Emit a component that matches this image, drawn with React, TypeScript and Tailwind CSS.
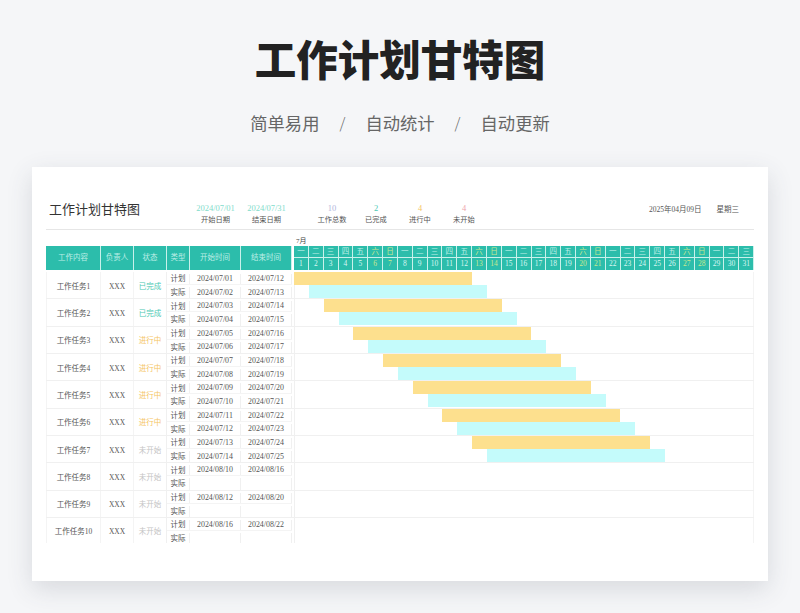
const SANS = "font-['Noto_Sans_CJK_SC',sans-serif]";
const SERIF = "font-['Liberation_Serif','Noto_Sans_CJK_SC',serif]";

const WEEK = ["一", "二", "三", "四", "五", "六", "日"];
const DAY_W = 460 / 31;

type Task = {
  name: string;
  status: string;
  color: string;
  plan: string[];
  real: string[];
};

const pad = (n: number) => String(n).padStart(2, "0");

const done = "text-[#4cc9b4]";
const doing = "text-[#f5c563]";
const todo = "text-[#c4c4c4]";

const TASKS: Task[] = [
  ...[1, 2, 3, 4, 5, 6, 7].map((n) => ({
    name: `工作任务${n}`,
    status: n <= 2 ? "已完成" : n <= 6 ? "进行中" : "未开始",
    color: n <= 2 ? done : n <= 6 ? doing : todo,
    plan: [`2024/07/${pad(2 * n - 1)}`, `2024/07/${pad(2 * n + 10)}`],
    real: [`2024/07/${pad(2 * n)}`, `2024/07/${pad(2 * n + 11)}`],
  })),
  { name: "工作任务8", status: "未开始", color: todo, plan: ["2024/08/10", "2024/08/16"], real: ["", ""] },
  { name: "工作任务9", status: "未开始", color: todo, plan: ["2024/08/12", "2024/08/20"], real: ["", ""] },
  { name: "工作任务10", status: "未开始", color: todo, plan: ["2024/08/16", "2024/08/22"], real: ["", ""] },
];

const HEAD = [
  ["工作内容", "w-[55px]"],
  ["负责人", "w-[33px]"],
  ["状态", "w-[33px]"],
  ["类型", "w-[23px]"],
  ["开始时间", "w-[51px]"],
  ["结束时间", "w-[51px]"],
];

function Stat({ value, label, color, width }: { value: string; label: string; color: string; width: string }) {
  return (
    <div className={`flex flex-col items-center ${width}`}>
      <span className={`text-[8.5px] leading-[11px] ${color}`}>{value}</span>
      <span className="mt-[1px] text-[7.25px] leading-[11px] text-[#555]">{label}</span>
    </div>
  );
}

function SubRow({ type, from, to, last }: { type: string; from: string; to: string; last?: boolean }) {
  const border = last ? "" : "border-b border-[#f4f4f4]";
  return (
    <div className={`flex h-1/2 pt-[2px] text-[#555] ${border}`}>
      <div className="flex w-[23px] items-center justify-center border-r border-[#f0f0f0] text-[7.5px]">{type}</div>
      <div className="flex w-[51px] items-center justify-center border-r border-[#f0f0f0] text-[7.9px]">{from}</div>
      <div className="flex w-[51px] items-center justify-center border-r border-[#f0f0f0] text-[7.9px]">{to}</div>
    </div>
  );
}

function Row({ task, index }: { task: Task; index: number }) {
  const hasBars = index < 7;
  return (
    <div className="flex h-[27.33px] shrink-0 border-b border-[#f0f0f0]">
      <div className="flex w-[55px] items-center justify-center border-x border-[#f4f4f4] pt-[2px] text-[7.5px] text-[#555]">
        {task.name}
      </div>
      <div className="flex w-[33px] items-center justify-center border-r border-[#f4f4f4] pt-[2px] text-[7.5px] text-[#555]">
        XXX
      </div>
      <div className={`flex w-[33px] items-center justify-center border-r border-[#f0f0f0] pt-[2px] text-[7.5px] ${task.color}`}>
        {task.status}
      </div>
      <div className="flex w-[125px] flex-col">
        <SubRow type="计划" from={task.plan[0]} to={task.plan[1]} />
        <SubRow type="实际" from={task.real[0]} to={task.real[1]} last />
      </div>
      <div className="ml-[2px] flex w-[460px] flex-col border-r border-[#f4f4f4] shadow-[inset_1px_0_0_#f0f0f0]">
        {hasBars && (
          <>
            <div className="flex h-1/2 items-start">
              <div
                className="h-[13px] bg-[#fde08e]"
                style={{ marginLeft: index * 2 * DAY_W, width: 12 * DAY_W }}
              />
            </div>
            <div className="flex h-1/2 items-start">
              <div
                className="h-[13px] bg-[#c4fbfb]"
                style={{ marginLeft: (index * 2 + 1) * DAY_W, width: 12 * DAY_W }}
              />
            </div>
          </>
        )}
      </div>
    </div>
  );
}

export default function App() {
  const days = Array.from({ length: 31 }, (_, i) => i + 1);
  return (
    <div className={`flex h-[613px] w-[800px] flex-col items-center overflow-hidden bg-[#f5f6f8] ${SANS}`}>
      <h1 className="mt-[31px] text-[41.5px] font-black leading-[54px] text-[#222222]">工作计划甘特图</h1>

      <div className="mt-[25px] flex items-center text-[17.3px] leading-[26px] text-[#666666]">
        <span>简单易用</span>
        <span className="mx-[18px] w-[10px] text-center text-[15px] font-light">/</span>
        <span>自动统计</span>
        <span className="mx-[18px] w-[10px] text-center text-[15px] font-light">/</span>
        <span>自动更新</span>
      </div>

      <div className="mt-[31px] h-[414px] w-[736px] shrink-0 bg-white px-[14px] shadow-[0_8px_24px_rgba(60,70,90,0.16)]">
        {/* Sheet header */}
        <div className={`flex h-[63px] items-end border-b border-[#e6e6e6] pb-[3px] ${SERIF}`}>
          <div className="w-[144px] self-start pl-[3px] pt-[34px] text-[13px] leading-[18px] text-[#333333]">
            工作计划甘特图
          </div>
          <Stat value="2024/07/01" label="开始日期" color="text-[#7fdccb]" width="w-[51px]" />
          <Stat value="2024/07/31" label="结束日期" color="text-[#7fdccb]" width="w-[51px]" />
          <div className="w-[18px]" />
          <Stat value="10" label="工作总数" color="text-[#b3b6dd]" width="w-[44px]" />
          <Stat value="2" label="已完成" color="text-[#4cc9b4]" width="w-[44px]" />
          <Stat value="4" label="进行中" color="text-[#f5c563]" width="w-[44px]" />
          <Stat value="4" label="未开始" color="text-[#eea3ad]" width="w-[44px]" />
          <div className="ml-auto flex self-start pt-[37px] text-[7.5px] leading-[11px] text-[#555]">
            <span>2025年04月09日</span>
            <span className="ml-[15px] mr-[15px]">星期三</span>
          </div>
        </div>

        {/* Table */}
        <div className={`flex h-[313px] flex-col overflow-hidden ${SERIF}`}>
          <div className="flex h-[16px] shrink-0 items-end">
            <div className="w-[246px]" />
            <span className="ml-[4px] text-[7px] leading-[10px] text-[#444]">7月</span>
          </div>

          <div className="flex h-[24px] shrink-0">
            {HEAD.map(([label, w]) => (
              <div
                key={label}
                className={`flex ${w} items-center justify-center border-r border-[#c9f1eb] bg-[#2cbdab] text-[7.5px] text-[#bdeee6]`}
              >
                {label}
              </div>
            ))}
            <div className="ml-[2px] flex w-[460px] flex-col bg-[#2cbdab]">
              <div className="flex h-1/2 border-b border-[#c9f1eb]">
                {days.map((d) => (
                  <div
                    key={d}
                    className={`flex flex-1 items-center justify-center border-r border-[#c9f1eb] text-[7.5px] ${
                      (d - 1) % 7 >= 5 ? "text-[#c9e88e]" : "text-[#bdeee6]"
                    }`}
                  >
                    {WEEK[(d - 1) % 7]}
                  </div>
                ))}
              </div>
              <div className="flex h-1/2">
                {days.map((d) => (
                  <div
                    key={d}
                    className={`flex flex-1 items-center justify-center border-r border-[#c9f1eb] text-[7.5px] ${
                      (d - 1) % 7 >= 5 ? "text-[#c9e88e]" : "text-[#d8f6f1]"
                    }`}
                  >
                    {d}
                  </div>
                ))}
              </div>
            </div>
          </div>

          <div className="mt-[2px] flex shrink-0 flex-col">
            {TASKS.map((task, i) => (
              <Row key={task.name} task={task} index={i} />
            ))}
          </div>
        </div>
      </div>
    </div>
  );
}
